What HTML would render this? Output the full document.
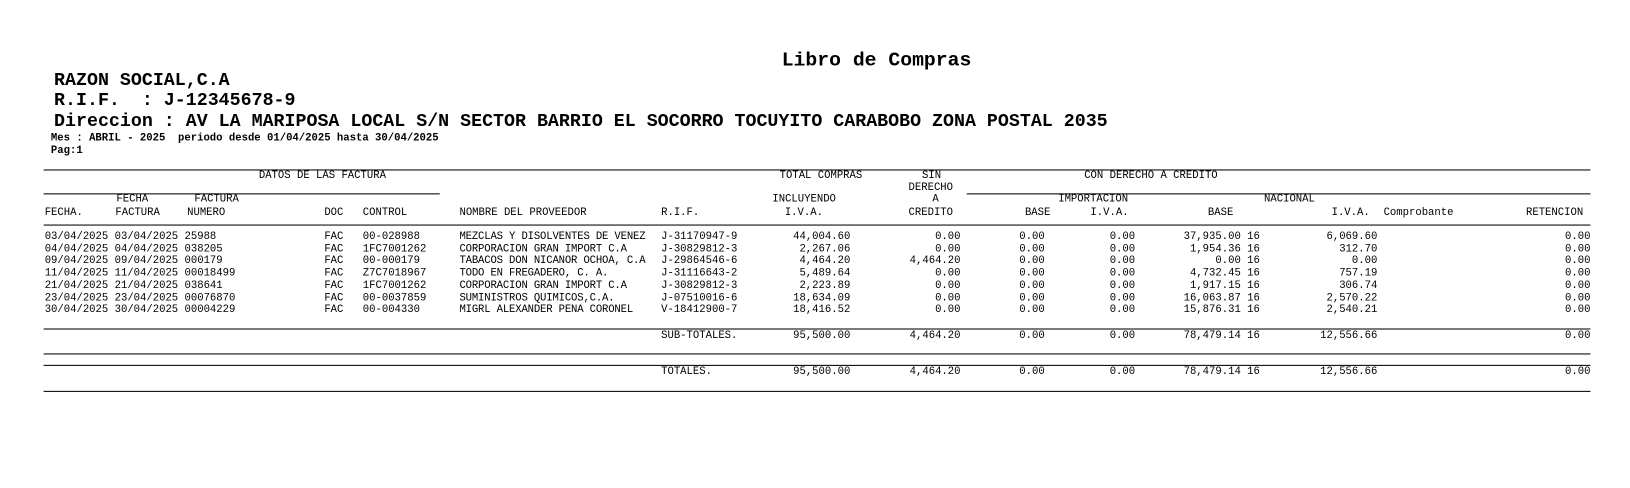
<!DOCTYPE html>
<html><head><meta charset="utf-8"><style>
html,body{margin:0;padding:0;background:#fff;width:1630px;height:488px;overflow:hidden}
#w{position:absolute;left:0;top:0;width:1568px;height:469px;transform:scale(1.0395);transform-origin:0 0}
#w div{position:absolute;white-space:pre;font-family:"Liberation Mono","Courier New",monospace;color:#000;line-height:11.7px;font-size:10.2px}
#w .b{font-weight:bold}
#w .r{text-align:right}
#w .hl{height:1px;background:#000}
</style></head><body><div id="w">
<div class="b" style="left:752px;top:47px;font-size:19px;line-height:22px">Libro de Compras</div>
<div class="b" style="left:52px;top:68px;font-size:17.6px;line-height:20px">RAZON SOCIAL,C.A</div>
<div class="b" style="left:52px;top:87px;font-size:17.6px;line-height:20px">R.I.F.  : J-12345678-9</div>
<div class="b" style="left:52px;top:107px;font-size:17.6px;line-height:20px">Direccion : AV LA MARIPOSA LOCAL S/N SECTOR BARRIO EL SOCORRO TOCUYITO CARABOBO ZONA POSTAL 2035</div>
<div class="b" style="left:49px;top:128px">Mes : ABRIL - 2025  periodo desde 01/04/2025 hasta 30/04/2025</div>
<div class="b" style="left:49px;top:140px">Pag:1</div>

<div class="hl" style="left:42px;top:163px;width:1488px"></div>
<div class="hl" style="left:42px;top:186px;width:381px"></div>
<div class="hl" style="left:930px;top:186px;width:600px"></div>
<div class="hl" style="left:42px;top:216px;width:1488px"></div>
<div class="hl" style="left:42px;top:316px;width:1488px"></div>
<div class="hl" style="left:42px;top:340px;width:1488px"></div>
<div class="hl" style="left:42px;top:351px;width:1488px"></div>
<div class="hl" style="left:42px;top:376px;width:1488px"></div>

<div style="left:249px;top:164px">DATOS DE LAS FACTURA</div>
<div style="left:750px;top:164px">TOTAL COMPRAS</div>
<div style="left:887px;top:164px">SIN</div>
<div style="left:874px;top:176px">DERECHO</div>
<div style="left:1043px;top:164px">CON DERECHO A CREDITO</div>
<div style="left:112px;top:187px">FECHA</div>
<div style="left:187px;top:187px">FACTURA</div>
<div style="left:743px;top:187px">INCLUYENDO</div>
<div style="left:897px;top:187px">A</div>
<div style="left:1018px;top:187px">IMPORTACION</div>
<div style="left:1216px;top:187px">NACIONAL</div>
<div style="left:43px;top:200px">FECHA.</div>
<div style="left:111px;top:200px">FACTURA</div>
<div style="left:180px;top:200px">NUMERO</div>
<div style="left:312px;top:200px">DOC</div>
<div style="left:349px;top:200px">CONTROL</div>
<div style="left:442px;top:200px">NOMBRE DEL PROVEEDOR</div>
<div style="left:636px;top:200px">R.I.F.</div>
<div style="left:755px;top:200px">I.V.A.</div>
<div style="left:874px;top:200px">CREDITO</div>
<div style="left:986px;top:200px">BASE</div>
<div style="left:1049px;top:200px">I.V.A.</div>
<div style="left:1162px;top:200px">BASE</div>
<div style="left:1281px;top:200px">I.V.A.</div>
<div style="left:1331px;top:200px">Comprobante</div>
<div style="left:1468px;top:200px">RETENCION</div>

<div style="left:43px;top:223px">03/04/2025 03/04/2025 25988
04/04/2025 04/04/2025 038205
09/04/2025 09/04/2025 000179
11/04/2025 11/04/2025 00018499
21/04/2025 21/04/2025 038641
23/04/2025 23/04/2025 00076870
30/04/2025 30/04/2025 00004229</div>
<div style="left:312px;top:223px">FAC
FAC
FAC
FAC
FAC
FAC
FAC</div>
<div style="left:349px;top:223px">00-028988
1FC7001262
00-000179
Z7C7018967
1FC7001262
00-0037859
00-004330</div>
<div style="left:442px;top:223px;letter-spacing:-0.15px">MEZCLAS Y DISOLVENTES DE VENEZ
CORPORACION GRAN IMPORT C.A
TABACOS DON NICANOR OCHOA, C.A
TODO EN FREGADERO, C. A.
CORPORACION GRAN IMPORT C.A
SUMINISTROS QUIMICOS,C.A.
MIGRL ALEXANDER PENA CORONEL</div>
<div style="left:636px;top:223px">J-31170947-9
J-30829812-3
J-29864546-6
J-31116643-2
J-30829812-3
J-07510016-6
V-18412900-7</div>
<div class="r" style="right:750px;top:223px">44,004.60
2,267.06
4,464.20
5,489.64
2,223.89
18,634.09
18,416.52</div>
<div class="r" style="right:644px;top:223px">0.00
0.00
4,464.20
0.00
0.00
0.00
0.00</div>
<div class="r" style="right:563px;top:223px">0.00
0.00
0.00
0.00
0.00
0.00
0.00</div>
<div class="r" style="right:476px;top:223px">0.00
0.00
0.00
0.00
0.00
0.00
0.00</div>
<div class="r" style="right:356px;top:223px">37,935.00 16
1,954.36 16
0.00 16
4,732.45 16
1,917.15 16
16,063.87 16
15,876.31 16</div>
<div class="r" style="right:243px;top:223px">6,069.60
312.70
0.00
757.19
306.74
2,570.22
2,540.21</div>
<div class="r" style="right:38px;top:223px">0.00
0.00
0.00
0.00
0.00
0.00
0.00</div>

<div style="left:636px;top:318px">SUB-TOTALES.</div>
<div class="r" style="right:750px;top:318px">95,500.00</div>
<div class="r" style="right:644px;top:318px">4,464.20</div>
<div class="r" style="right:563px;top:318px">0.00</div>
<div class="r" style="right:476px;top:318px">0.00</div>
<div class="r" style="right:356px;top:318px">78,479.14 16</div>
<div class="r" style="right:243px;top:318px">12,556.66</div>
<div class="r" style="right:38px;top:318px">0.00</div>

<div style="left:636px;top:353px">TOTALES.</div>
<div class="r" style="right:750px;top:353px">95,500.00</div>
<div class="r" style="right:644px;top:353px">4,464.20</div>
<div class="r" style="right:563px;top:353px">0.00</div>
<div class="r" style="right:476px;top:353px">0.00</div>
<div class="r" style="right:356px;top:353px">78,479.14 16</div>
<div class="r" style="right:243px;top:353px">12,556.66</div>
<div class="r" style="right:38px;top:353px">0.00</div>
</div></body></html>
